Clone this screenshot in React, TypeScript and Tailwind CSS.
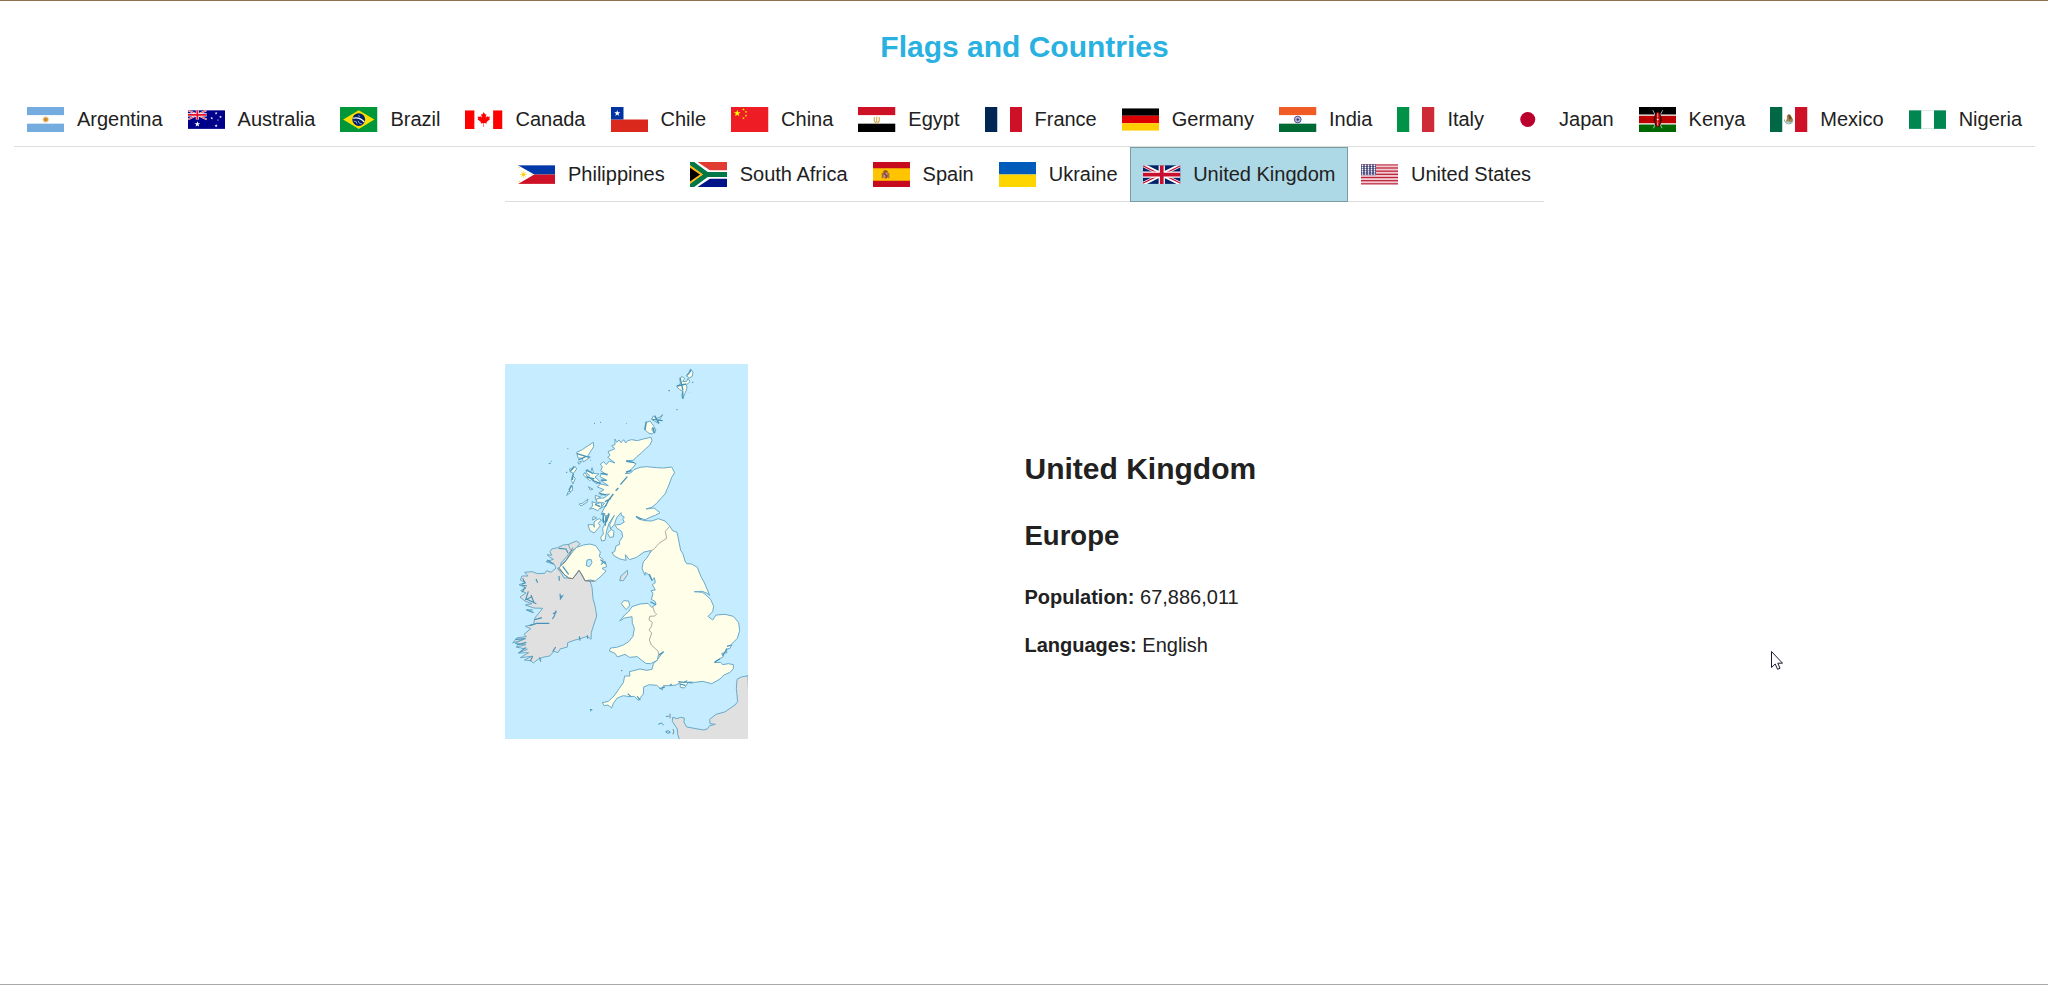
import type { ReactNode } from "react";

const STAR = "M0-10 2.4-3.1 9.5-3.1 3.8 1.2 5.9 8.1 0 4-5.9 8.1-3.8 1.2-9.5-3.1-2.4-3.1Z";

function Star({ x, y, s, fill = "#fff" }: { x: number; y: number; s: number; fill?: string }) {
  return <path d={STAR} fill={fill} transform={`translate(${x} ${y}) scale(${s})`} />;
}

function Bands({ colors, vertical = false, h = 40 }: { colors: string[]; vertical?: boolean; h?: number }) {
  return (
    <>
      {colors.map((c, i) =>
        vertical ? (
          <rect key={i} x={i * 20} width="20" height={h} fill={c} />
        ) : (
          <rect key={i} y={(i * h) / colors.length} width="60" height={h / colors.length} fill={c} />
        ),
      )}
    </>
  );
}

function UnionJack() {
  return (
    <>
      <rect width="60" height="30" fill="#012169" />
      <path d="M0 0 60 30M60 0 0 30" stroke="#fff" strokeWidth="6" />
      <path d="M0 1 30 16M30 14 60 29M60 1 30 16M30 14 0 29" stroke="#c8102e" strokeWidth="2" />
      <path d="M30 0V30M0 15H60" stroke="#fff" strokeWidth="10" />
      <path d="M30 0V30M0 15H60" stroke="#c8102e" strokeWidth="6" />
    </>
  );
}

type Country = { name: string; h: number; flag: ReactNode };

const firstRow: Country[] = [
  {
    name: "Argentina",
    h: 40,
    flag: (
      <>
        <Bands colors={["#74acdf", "#fff", "#74acdf"]} />
        <circle cx="30" cy="20" r="4.8" fill="#f0c987" />
        <circle cx="30" cy="20" r="3.2" fill="#d18a2c" />
      </>
    ),
  },
  {
    name: "Australia",
    h: 30,
    flag: (
      <>
        <rect width="60" height="30" fill="#00008b" />
        <g transform="scale(.5)">
          <path d="M0 0 60 30M60 0 0 30" stroke="#fff" strokeWidth="6" />
          <path d="M0 0 60 30M60 0 0 30" stroke="#e8112d" strokeWidth="2.5" />
          <path d="M30 0V30M0 15H60" stroke="#fff" strokeWidth="10" />
          <path d="M30 0V30M0 15H60" stroke="#e8112d" strokeWidth="6" />
        </g>
        <Star x={15} y={22.5} s={0.48} />
        <Star x={45} y={5} s={0.24} />
        <Star x={38} y={13} s={0.24} />
        <Star x={52} y={11} s={0.24} />
        <Star x={45} y={25} s={0.27} />
        <Star x={48} y={16} s={0.14} />
      </>
    ),
  },
  {
    name: "Brazil",
    h: 40,
    flag: (
      <>
        <rect width="60" height="40" fill="#009739" />
        <path d="M5 20 30 5 55 20 30 35Z" fill="#fedd00" />
        <circle cx="30" cy="20" r="10.2" fill="#012169" />
        <path d="M20.5 18Q31 15 39 24" stroke="#fff" strokeWidth="2" fill="none" />
        <path d="M22 22.5l4 1 1 3M29 22l2 4 4 1M29 14l3 1" stroke="#c5d0e6" strokeWidth="1.2" fill="none" />
      </>
    ),
  },
  {
    name: "Canada",
    h: 30,
    flag: (
      <>
        <rect width="60" height="30" fill="#fff" />
        <path d="M0 0H15V30H0ZM45 0H60V30H45Z" fill="#f00" />
        <path
          d="M30 3 27.8 7 25.7 6 27 12 24 9.2 23.4 10.8 20 10.3 21.2 13.7 20 14.5 25.5 19 25 21.3 29.6 20.7V27H30.4V20.7L35 21.3 34.5 19 40 14.5 38.8 13.7 40 10.3 36.6 10.8 36 9.2 33 12 34.3 6 32.2 7Z"
          fill="#f00"
        />
      </>
    ),
  },
  {
    name: "Chile",
    h: 40,
    flag: (
      <>
        <rect width="60" height="40" fill="#fff" />
        <rect y="20" width="60" height="20" fill="#da291c" />
        <rect width="20" height="20" fill="#0032a0" />
        <Star x={10} y={10} s={0.52} />
      </>
    ),
  },
  {
    name: "China",
    h: 40,
    flag: (
      <>
        <rect width="60" height="40" fill="#ee1c25" />
        <Star x={10} y={10} s={0.58} fill="#ff0" />
        <Star x={20} y={4} s={0.22} fill="#ff0" />
        <Star x={24} y={8} s={0.22} fill="#ff0" />
        <Star x={24} y={14} s={0.22} fill="#ff0" />
        <Star x={20} y={18} s={0.22} fill="#ff0" />
      </>
    ),
  },
  {
    name: "Egypt",
    h: 40,
    flag: (
      <>
        <Bands colors={["#ce1126", "#fff", "#000"]} />
        <path d="M26 16v6l2 3M34 16v6l-2 3M30 15v9M27 25.5h6" stroke="#c9a544" strokeWidth="1.7" fill="none" />
      </>
    ),
  },
  { name: "France", h: 40, flag: <Bands vertical colors={["#002654", "#fff", "#ce1126"]} /> },
  { name: "Germany", h: 36, flag: <Bands h={36} colors={["#000", "#d00", "#ffce00"]} /> },
  {
    name: "India",
    h: 40,
    flag: (
      <>
        <Bands colors={["#f15b25", "#fff", "#006a34"]} />
        <circle cx="30" cy="20" r="5.4" fill="#c5c6e0" stroke="#34347f" strokeWidth="1.3" />
        <path d="M30 15v10M25 20h10M26.5 16.5l7 7M33.5 16.5l-7 7" stroke="#6a6aa5" strokeWidth=".6" />
        <circle cx="30" cy="20" r="1.8" fill="#29297a" />
      </>
    ),
  },
  { name: "Italy", h: 40, flag: <Bands vertical colors={["#009246", "#fff", "#ce2b37"]} /> },
  {
    name: "Japan",
    h: 40,
    flag: (
      <>
        <rect width="60" height="40" fill="#fff" />
        <circle cx="30" cy="20" r="12" fill="#bc002d" />
      </>
    ),
  },
  {
    name: "Kenya",
    h: 40,
    flag: (
      <>
        <rect width="60" height="40" fill="#fff" />
        <rect width="60" height="12" fill="#000" />
        <rect y="14" width="60" height="12" fill="#b00" />
        <rect y="28" width="60" height="12" fill="#060" />
        <path d="M22 5 37 34M38 5 23 34" stroke="#fff" strokeWidth="1" />
        <ellipse cx="30" cy="20" rx="6" ry="12" fill="#200" />
        <ellipse cx="30" cy="20" rx="4" ry="12" fill="#b00" />
        <path d="M30 10v7M30 23v7" stroke="#fff" strokeWidth="1" />
        <circle cx="30" cy="20" r="1.5" fill="#fff" />
      </>
    ),
  },
  {
    name: "Mexico",
    h: 40,
    flag: (
      <>
        <Bands vertical colors={["#006847", "#fff", "#ce1126"]} />
        <path d="M27 14q5-5 7 1l3 5-3 5-4-2-5 0 2-4Z" fill="#a8804f" />
        <path d="M29 12l4 2 2 5-4 1Z" fill="#6d4a2b" />
        <path d="M23 20q1 7 7 7t7-6" stroke="#7cab8c" strokeWidth="1.6" fill="none" />
        <path d="M26 24h7" stroke="#4aa7b5" strokeWidth="1.6" />
      </>
    ),
  },
  {
    name: "Nigeria",
    h: 30,
    flag: (
      <>
        <Bands vertical h={30} colors={["#008751", "#fff", "#008751"]} />
        <path d="M20 .5H40M20 29.5H40" stroke="#b5dccb" strokeWidth="1" />
      </>
    ),
  },
];

const secondRow: Country[] = [
  {
    name: "Philippines",
    h: 30,
    flag: (
      <>
        <rect width="60" height="15" fill="#0038a8" />
        <rect y="15" width="60" height="15" fill="#ce1126" />
        <path d="M0 0 26 15 0 30Z" fill="#fff" />
        <circle cx="8.7" cy="15" r="2.8" fill="#fcd116" />
        <path d="M8.7 9.5v11M3.2 15h11M4.8 11.1l7.8 7.8M12.6 11.1l-7.8 7.8" stroke="#fcd116" strokeWidth="1" />
        <g fill="#fcd116">
          <circle cx="2" cy="4" r="1.1" />
          <circle cx="2" cy="26" r="1.1" />
          <circle cx="22" cy="15" r="1.1" />
        </g>
      </>
    ),
  },
  {
    name: "South Africa",
    h: 40,
    flag: (
      <>
        <rect width="60" height="20" fill="#e03c31" />
        <rect y="20" width="60" height="20" fill="#001489" />
        <path d="M0 0 30 20 0 40M24 20H60" stroke="#fff" strokeWidth="13.4" fill="none" />
        <path d="M0 4V36L24 20Z" fill="#ffb81c" />
        <path d="M0 0 27 20 0 40M26 20H60" stroke="#007749" strokeWidth="8" fill="none" />
        <path d="M0 5.5V34.5L21 20Z" fill="#ffb81c" />
        <path d="M0 9V31L16 20Z" fill="#000" />
      </>
    ),
  },
  {
    name: "Spain",
    h: 40,
    flag: (
      <>
        <rect width="60" height="40" fill="#c60b1e" />
        <rect y="10" width="60" height="20" fill="#ffc400" />
        <path d="M15 17v9M25.2 17v9" stroke="#97703c" strokeWidth="2" />
        <path d="M16.5 16.5h7v8q-3.5 4-7 0Z" fill="#8f3a2e" />
        <path d="M15.5 15.5q4.5-4.5 9 0" fill="#6b4423" />
        <path d="M20 17h3v3.5h-3ZM17 20.5h3V25h-3Z" fill="#c79aa6" />
        <circle cx="20" cy="20.5" r="1.2" fill="#33507a" />
      </>
    ),
  },
  { name: "Ukraine", h: 40, flag: <Bands colors={["#005bbb", "#ffd500"]} /> },
  { name: "United Kingdom", h: 30, flag: <UnionJack /> },
  {
    name: "United States",
    h: 33,
    flag: (
      <>
        <rect width="60" height="33" fill="#f3c9d0" />
        {[0, 1, 2, 3, 4, 5, 6].map((i) => (
          <rect key={i} y={i * 5.08} width="60" height="2" fill="#b9243a" />
        ))}
        <rect width="24" height="17.6" fill="#45447c" />
        {Array.from({ length: 25 }, (_, i) => (
          <circle key={i} cx={2.4 + (i % 5) * 4.8} cy={1.9 + Math.floor(i / 5) * 3.45} r="1.35" fill="#fff" />
        ))}
      </>
    ),
  },
];

function FlagItem({ country, active = false }: { country: Country; active?: boolean }) {
  return (
    <li
      className={
        active
          ? "flex h-[55px] items-center gap-[12.5px] border border-[#7b9ba5] bg-[#add8e6] px-[12px] pb-px"
          : "flex h-[55px] items-center gap-[12.5px] border-b border-[#ddd] px-[12.5px]"
      }
    >
      <svg
        viewBox={`0 0 60 ${country.h}`}
        preserveAspectRatio="xMidYMid meet"
        className="h-[25px] w-[37.5px] shrink-0"
      >
        <defs>
          <clipPath id={`clip-${country.name.replace(" ", "")}`}>
            <rect width="60" height={country.h} />
          </clipPath>
        </defs>
        <g clipPath={`url(#clip-${country.name.replace(" ", "")})`}>{country.flag}</g>
      </svg>
      <span className="whitespace-nowrap">{country.name}</span>
    </li>
  );
}

const GREAT_BRITAIN =
  "M345 237 350 247 357 240 363 248 371 239 377 249 383 242 395 239 412 242 430 237 453 232 456 242 449 256 436 267 425 278 410 291 399 301 378 302 396 306 408 311 398 324 385 334 376 341 392 339 402 329 420 322 440 320 470 323 490 324 515 321 524 338 515 352 508 372 501 388 496 401 485 413 470 430 455 442 438 447 462 444 470 450 480 458 466 466 450 472 436 479 415 474 408 468 415 477 435 482 455 483 475 476 495 483 508 497 518 512 531 517 536 540 542 571 549 582 555 603 560 611 575 612 592 622 603 650 612 666 618 680 629 706 620 699 607 694 583 695 607 697 618 705 632 718 641 739 638 755 624 769 638 780 648 765 675 763 700 769 716 788 719 812 712 835 697 850 690 865 678 868 681 878 665 880 670 890 655 899 643 908 662 907 668 914 685 911 700 914 700 926 690 937 672 945 660 957 635 971 608 964 585 967 566 966 553 984 541 982 540 968 528 975 512 977 490 977 487 990 470 976 448 974 431 981 430 1002 415 1021 403 1009 388 1010 370 1007 352 1014 340 1030 335 1044 324 1035 312 1037 307 1028 325 1024 342 1008 358 985 370 968 374 948 390 948 388 935 420 927 440 931 456 928 460 912 473 898 489 876 475 886 472 901 452 911 437 910 424 900 412 890 388 892 375 883 352 891 345 880 328 873 332 864 350 862 370 855 386 845 399 829 403 805 397 790 396 770 374 774 359 783 374 765 385 756 396 740 420 732 444 730 455 742 468 733 466 725 454 718 459 700 453 692 466 690 457 674 466 668 463 653 456 662 447 645 436 637 435 646 426 625 430 605 439 596 455 571 432 576 410 592 388 599 376 584 378 601 360 597 343 588 336 578 344 575 348 558 359 553 358 545 368 530 365 514 351 505 345 495 362 493 373 486 368 477 373 471 364 466 363 458 350 473 343 493 332 507 329 494 343 466 327 490 320 512 315 541 305 543 302 532 310 522 308 505 322 478 326 460 314 485 306 483 315 460 303 463 317 437 300 446 314 429 288 426 292 415 312 414 328 402 302 405 296 399 312 389 292 381 302 372 325 377 302 361 320 361 300 350 304 341 322 345 302 332 307 321 301 312 311 305 319 314 328 303 345 309 323 292 330 286 324 275 345 266 335 258 345 254Z";

const IRELAND =
  "M150 575 155 567 173 563 190 555 209 553 214 570 200 590 182 610 183 620 172 625 182 637 192 654 206 654 218 656 229 642 237 631 246 645 255 662 270 663 276 682 279 716 284 733 287 748 290 768 281 795 274 817 273 838 262 829 240 836 222 841 203 848 202 861 180 867 174 878 162 874 149 888 132 891 115 897 100 909 92 902 73 900 95 889 61 893 86 878 54 879 82 868 48 861 78 854 45 850 71 838 38 849 52 833 79 830 72 823 92 806 76 799 101 793 104 775 128 745 102 744 76 735 96 731 76 724 60 711 78 699 62 692 78 684 57 674 77 668 61 660 66 648 84 648 74 637 96 635 112 641 134 640 140 632 153 637 168 624 163 613 138 605 160 598 149 591 141 584 155 586Z";

const NORTHERN_IRELAND =
  "M218 575 230 562 251 555 270 552 287 557 294 567 301 576 298 590 310 599 304 614 315 603 320 620 306 625 318 633 304 648 286 663 272 660 255 662 246 645 237 631 229 642 218 656 206 654 192 643 186 634 178 624 184 612 198 602Z";

const ISLANDS = [
  "M280 247 281 260 270 277 262 290 271 291 250 306 247 295 234 294 230 277 247 269 258 261Z",
  "M245 304 237 313 233 307Z",
  "M225 319 230 327 220 340 210 335 209 326 218 328Z",
  "M217 347 226 355 219 372 214 361Z",
  "M217 377 218 391 206 398 211 385Z",
  "M206 393 212 397 200 406Z",
  "M276 323 281 340 297 342 285 351 302 367 288 371 276 357 269 362 250 345 254 337 264 353 269 347 258 337 263 328 272 338Z",
  "M265 380 279 388 271 390Z",
  "M286 406 302 411 286 419Z",
  "M264 417 261 427 243 438 237 432 248 430Z",
  "M276 425 292 431 304 427 305 440 293 452 279 445 268 447 278 438Z",
  "M280 469 290 474 277 480Z",
  "M298 476 304 480 295 490 301 498 290 510 282 519 269 511 264 494 280 494 283 502 282 486 290 480Z",
  "M333 508 342 514 340 531 329 532 323 520Z",
  "M437 188 450 183 462 199 466 211 457 222 447 220 434 209Z",
  "M488 164 480 177 470 183 476 190 464 184 455 177 460 168 468 176 477 173Z",
  "M456 205 468 208 464 218 457 213Z",
  "M571 27 579 35 577 49 568 54 558 47 568 39Z",
  "M545 49 554 55 548 65 560 64 564 55 570 65 559 75 561 84 556 98 548 116 545 106 549 94 538 88 529 79 541 73 540 57Z",
];

function UnitedKingdomMap() {
  return (
    <svg viewBox="15 12 729 1125" preserveAspectRatio="none" className="h-[375px] w-[243px]">
      <rect x="15" y="12" width="729" height="1125" fill="#c6ecff" />
      <g stroke="#6aaac8" strokeWidth="3" strokeLinejoin="round">
        <path d={IRELAND} fill="#e0e0e0" />
        <path d="M205 554 219 547 230 543 240 551 230 562 216 573 210 566Z" fill="#e0e0e0" />
        <path d={NORTHERN_IRELAND} fill="#fefee9" />
        <path d={GREAT_BRITAIN} fill="#fefee9" />
        {ISLANDS.map((d) => (
          <path key={d} d={d} fill="#fefee9" />
        ))}
        <path d="M382 631 383 643 370 662 359 662 363 648Z" fill="#e0e0e0" />
        <path d="M371 722 386 723 389 737 378 749 364 731Z" fill="#fefee9" />
        <path
          d="M744 947 724 951 711 958 709 985 713 1025 705 1035 674 1056 648 1063 629 1078 630 1091 646 1093 629 1097 623 1106 611 1110 560 1101 552 1087 553 1074 541 1072 531 1076 518 1072 517 1084 532 1107 533 1123 539 1140H750Z"
          fill="#e0e0e0"
        />
        <path d="M261 600 273 598 276 608 268 620 259 617Z" fill="#c6ecff" />
      </g>
      <path
        d="M509 499 496 514 500 535 477 550 464 565 449 577M458 740 464 757 470 763 464 768 449 769 447 780 457 787 454 800 447 810 455 819 448 840 454 855 474 873 477 888"
        fill="none"
        stroke="#b1aaa2"
        strokeWidth="3"
      />
      <path
        d="M176 625 192 643 206 654 218 656 229 642 237 631 246 645 255 662 270 663 283 664M183 617 195 606 210 582 218 563"
        fill="none"
        stroke="#857e7b"
        strokeWidth="3"
      />
      <path
        d="M382 350 361 374M355 384 347 392M340 402 326 420 316 440M333 415 315 425M302 340 323 343M304 360 319 361M299 400 318 405M285 433 301 440M309 458 311 490M318 465 316 497M328 461 319 486M231 281 268 292M235 300 257 290M222 319 211 335M220 340 217 360M215 375 207 390M455 178 488 182M464 167 477 190M458 202 464 220M439 185 435 210M531 78 559 72M540 53 549 91M561 46 574 30M548 94 549 116M257 330 280 341M259 351 283 357M277 361 302 371M408 470 425 477M379 304 403 308M378 336 395 332"
        fill="none"
        stroke="#4693b8"
        strokeWidth="4"
      />
      <path
        d="M108 657 113 668M177 648 178 662M180 701 181 711 187 708 180 719M168 752 163 768 157 777M170 755 159 761M89 797 110 790 148 790M104 779 126 773M63 675 81 678M75 681 67 697M68 655 75 669 67 672M85 694 77 719 94 711M79 717 109 731M93 705 102 728M79 749 101 758M46 838 77 836M50 855 79 847M58 878 77 862M91 904 98 888M119 892 122 905M158 875 167 861M238 829 240 842M262 826 263 836M188 619 206 643M176 565 198 567 204 579M141 600 161 612M535 965 551 967 562 962M540 972 556 976M552 966 578 969M479 986 495 981M509 977 515 972M644 906 660 896M668 888 681 866M681 859 694 855M477 884 492 875M451 725 468 734M448 642 457 662M383 1001 393 1010M411 1009 421 1020M301 599 317 612"
        fill="none"
        stroke="#4693b8"
        strokeWidth="3.5"
      />
      <path
        d="M505 92h5M529 149h4M282 190h3M300 187h3M378 191h2M146 310h6M152 305l3-2M202 266h3M198 337h4M568 97h1M271 301h2M576 67h4M363 932h4M270 1049h7M272 1054v-7M475 1093l9-4 7 6M498 1069h8M497 1115l8-3 6 5-8 3ZM80 750h18"
        fill="none"
        stroke="#4693b8"
        strokeWidth="3"
      />
      <path d="M510 1061v14M519 1107q5 6 0 16" fill="none" stroke="#555" strokeWidth="2" />
    </svg>
  );
}

export default function App() {
  return (
    <div className="relative flex h-[985px] w-full flex-col overflow-hidden border-t border-b border-t-[#93714f] border-b-[#a9a9a9] bg-white font-['Liberation_Sans',Arial,sans-serif] text-xl text-[#212121]">
      <h1 className="mt-[28px] pl-px text-center text-[30px] leading-[36px] font-bold text-[#29b1e2]">
        Flags and Countries
      </h1>
      <nav className="mt-[27px] pl-px">
        <ul className="flex justify-center">
          {firstRow.map((c) => (
            <FlagItem key={c.name} country={c} />
          ))}
        </ul>
        <ul className="flex justify-center">
          {secondRow.map((c) => (
            <FlagItem key={c.name} country={c} active={c.name === "United Kingdom"} />
          ))}
        </ul>
      </nav>
      <main className="mx-auto mt-[162px] grid w-[1038px] grid-cols-2 items-start">
        <UnitedKingdomMap />
        <section className="pt-[87px] pl-[.5px] leading-6">
          <h2 className="text-[30px] leading-[36px] font-bold">United Kingdom</h2>
          <h3 className="mt-[33px] text-[27.5px] leading-8 font-bold">Europe</h3>
          <p className="mt-[33px]">
            <strong>Population:</strong> 67,886,011
          </p>
          <p className="mt-6">
            <strong>Languages:</strong> English
          </p>
        </section>
      </main>
      <svg viewBox="0 0 12 19" className="absolute top-[650px] left-[1771px] h-[19px] w-3">
        <path
          d="M.5 .5V16.5L4.2 13 6.6 18.3 9 17.3 6.8 12.2H11.5Z"
          fill="#fff"
          stroke="#1c1c2b"
          strokeWidth="1"
        />
      </svg>
    </div>
  );
}
